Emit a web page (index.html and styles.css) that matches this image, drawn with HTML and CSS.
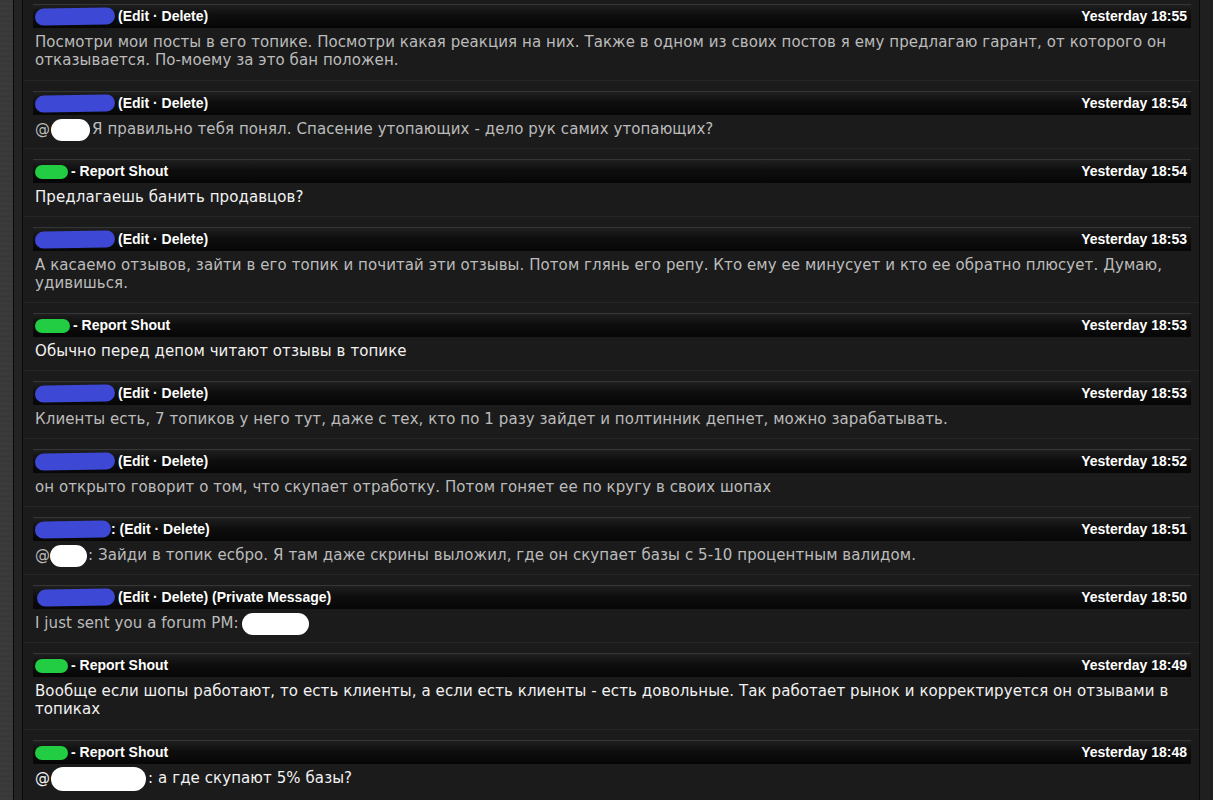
FILE: index.html
```html
<!DOCTYPE html>
<html lang="ru">
<head>
<meta charset="utf-8">
<title>Shoutbox</title>
<link rel="stylesheet" href="styles.css">
</head>
<body>
<div class="tex"></div>
<div class="frame"></div>
<main class="panel">
  <div class="shout first">
    <div class="bar"><span class="who"><span class="blob blue"></span><span class="acts">(Edit · Delete)</span></span><span class="time">Yesterday 18:55</span></div>
    <p class="msg own">Посмотри мои посты в его топике. Посмотри какая реакция на них. Также в одном из своих постов я ему предлагаю гарант, от которого он отказывается. По-моему за это бан положен.</p>
  </div>
  <div class="shout">
    <div class="bar"><span class="who"><span class="blob blue"></span><span class="acts">(Edit · Delete)</span></span><span class="time">Yesterday 18:54</span></div>
    <p class="msg own">@<span class="mask m1"></span>Я правильно тебя понял. Спасение утопающих - дело рук самих утопающих?</p>
  </div>
  <div class="shout">
    <div class="bar"><span class="who"><span class="blob green"></span><span class="acts">- Report Shout</span></span><span class="time">Yesterday 18:54</span></div>
    <p class="msg">Предлагаешь банить продавцов?</p>
  </div>
  <div class="shout">
    <div class="bar"><span class="who"><span class="blob blue"></span><span class="acts">(Edit · Delete)</span></span><span class="time">Yesterday 18:53</span></div>
    <p class="msg own">А касаемо отзывов, зайти в его топик и почитай эти отзывы. Потом глянь его репу. Кто ему ее минусует и кто ее обратно плюсует. Думаю, удивишься.</p>
  </div>
  <div class="shout">
    <div class="bar"><span class="who"><span class="blob green g2"></span><span class="acts">- Report Shout</span></span><span class="time">Yesterday 18:53</span></div>
    <p class="msg">Обычно перед депом читают отзывы в топике</p>
  </div>
  <div class="shout">
    <div class="bar"><span class="who"><span class="blob blue"></span><span class="acts">(Edit · Delete)</span></span><span class="time">Yesterday 18:53</span></div>
    <p class="msg own">Клиенты есть, 7 топиков у него тут, даже с тех, кто по 1 разу зайдет и полтинник депнет, можно зарабатывать.</p>
  </div>
  <div class="shout">
    <div class="bar"><span class="who"><span class="blob blue"></span><span class="acts">(Edit · Delete)</span></span><span class="time">Yesterday 18:52</span></div>
    <p class="msg own">он открыто говорит о том, что скупает отработку. Потом гоняет ее по кругу в своих шопах</p>
  </div>
  <div class="shout">
    <div class="bar"><span class="who"><span class="blob blue b2"></span><span class="acts">: (Edit · Delete)</span></span><span class="time">Yesterday 18:51</span></div>
    <p class="msg own">@<span class="mask m2"></span>: Зайди в топик есбро. Я там даже скрины выложил, где он скупает базы с 5-10 процентным валидом.</p>
  </div>
  <div class="shout">
    <div class="bar"><span class="who"><span class="blob blue b3"></span><span class="acts">(Edit · Delete) (Private Message)</span></span><span class="time">Yesterday 18:50</span></div>
    <p class="msg own">I just sent you a forum PM:<span class="mask m3"></span></p>
  </div>
  <div class="shout tall">
    <div class="bar"><span class="who"><span class="blob green"></span><span class="acts">- Report Shout</span></span><span class="time">Yesterday 18:49</span></div>
    <p class="msg">Вообще если шопы работают, то есть клиенты, а если есть клиенты - есть довольные. Так работает рынок и корректируется он отзывами в топиках</p>
  </div>
  <div class="shout">
    <div class="bar"><span class="who"><span class="blob green"></span><span class="acts">- Report Shout</span></span><span class="time">Yesterday 18:48</span></div>
    <p class="msg">@<span class="mask m4"></span>: а где скупают 5% базы?</p>
  </div>
</main>
<div class="gutter"></div>
</body>
</html>
```

FILE: styles.css
```css
html, body {
  margin: 0;
  padding: 0;
}
body {
  display: flex;
  height: 800px;
  overflow: hidden;
  background: #1f1f1f;
}
.tex {
  width: 13px;
  flex: none;
  background: repeating-linear-gradient(180deg, #3a3a3a 0px, #363636 2px, #3d3d3d 3px, #383838 5px);
  border-right: 1px solid #0a0a0a;
}
.frame {
  width: 8px;
  flex: none;
  background: #232323;
  border-right: 1px solid #0a0a0a;
}
.panel {
  flex: 1;
  background: #1b1b1b;
  border-right: 1px solid #0a0a0a;
  padding-top: 4px;
  overflow: hidden;
}
.gutter {
  width: 13px;
  flex: none;
  background: #1f1f1f;
}
.shout {
  border-top: 1px solid #262626;
  padding: 10px 8px 10px 10px;
}
.shout.first {
  border-top: 0;
  padding-top: 0;
  padding-bottom: 11px;
}
.shout.tall {
  padding-bottom: 11px;
}
.bar {
  display: flex;
  justify-content: space-between;
  align-items: center;
  height: 23px;
  border-top: 1px solid #363636;
  background: linear-gradient(180deg, #1f1f1f 0%, #0e0e0e 45%, #060606 100%);
  padding: 0 4px 0 2px;
  font-family: "Liberation Sans", Arial, sans-serif;
  font-weight: bold;
  font-size: 14px;
  line-height: 23px;
  color: #ffffff;
}
.who {
  display: flex;
  align-items: center;
}
.acts {
  margin-left: 3px;
}
.blob {
  display: inline-block;
  border-radius: 9px;
}
.blob.blue {
  width: 80px;
  height: 17px;
  background: #3d48d4;
  transform: rotate(-1deg);
}
.blob.b2 {
  width: 76px;
  margin-right: -3px;
}
.blob.b3 {
  width: 78px;
  margin-left: 2px;
}
.blob.green {
  width: 33px;
  height: 14px;
  border-radius: 7px;
  background: #22cd44;
}
.blob.g2 {
  width: 35px;
}
.msg {
  margin: 5px 0 0;
  padding-left: 2px;
  font-family: "DejaVu Sans", Verdana, sans-serif;
  font-size: 15px;
  letter-spacing: 0.08px;
  line-height: 18px;
  color: #f2f2f2;
}
.msg.own {
  color: #bcbcbc;
}
.mask {
  display: inline-block;
  vertical-align: middle;
  height: 22px;
  margin-top: -4px;
  margin-bottom: -4px;
  background: #ffffff;
  border-radius: 11px;
}
.m1 { width: 39px; margin-left: 1px; margin-right: 2px; }
.m2 { width: 37px; margin-right: 1px; }
.m3 { width: 67px; margin-left: 3px; }
.m4 { width: 95px; height: 24px; border-radius: 12px; margin-left: 1px; margin-right: 2px; margin-top: -5px; margin-bottom: -5px; }
```
